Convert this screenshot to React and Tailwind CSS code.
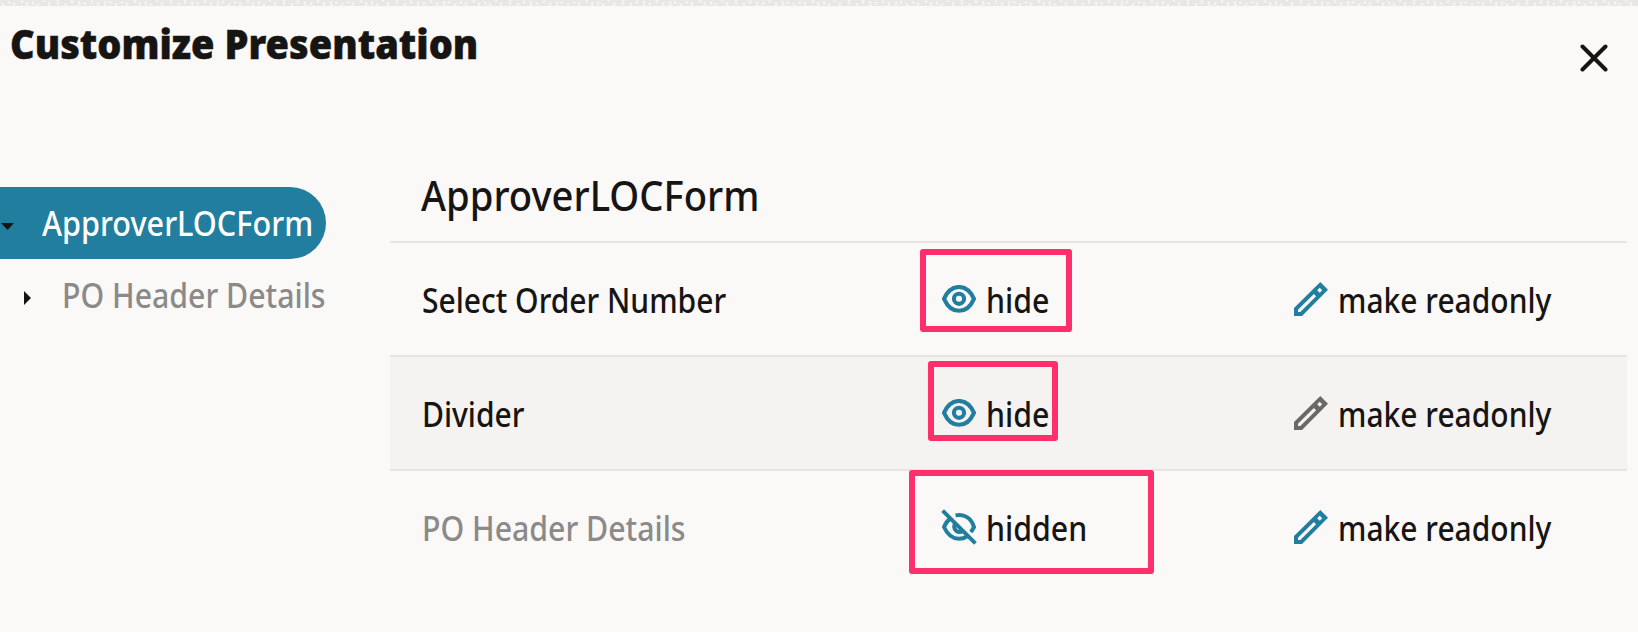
const text = "inline-block origin-left whitespace-nowrap font-medium";

function Eye() {
  return (
    <svg className="block h-[28px] w-[34px]" viewBox="0 0 34 28" fill="none" stroke="#227e9e" strokeWidth="4.1">
      <path d="M2 13.800C5.500 6 10.500 2 17 2s11.500 4 15 11.800C28.500 21.600 23.500 25.800 17 25.800S5.500 21.600 2 13.800Z" strokeLinejoin="round" />
      <circle cx="17" cy="13.800" r="5.100" />
    </svg>
  );
}

function EyeOff() {
  return (
    <svg className="block h-[36px] w-[36px]" viewBox="0 0 36 36" fill="none" stroke="#227e9e" strokeWidth="4">
      <path d="M14.500 6.400C24 4.500 30.500 9.500 33 18c-1 2-2 3.600-3.200 5" />
      <path d="M9.500 9.500C6.500 11.500 4.500 14.500 3 18c3.500 7.800 8.500 11.800 15 11.800 3 0 5.600-.800 7.900-2.300" />
      <path d="M13.800 14.500c-1.700 4.500.5 8 4.200 8.600 1.500.1 2.700-.3 3.700-1.100" />
      <path d="M1.600 1.600 34.400 34.400" />
    </svg>
  );
}

function Pencil({ className }) {
  return (
    <svg className={"block h-[34px] w-[34px] " + className} viewBox="0 0 34 34" fill="currentColor" fillRule="evenodd">
      <path d="M26.300 0 34 7.700 8 34H0V26ZM4 27.800V30H6.300L22.100 14.200 19.900 12ZM25.700 5.700 23.200 8.200 25.700 10.700 28.200 8.200Z" />
    </svg>
  );
}

function TextureBand() {
  return (
    <svg className="block h-[6px] w-full bg-[#e8e7e5]" aria-hidden="true">
      <defs>
        <pattern id="band" width="113" height="6" patternUnits="userSpaceOnUse">
          <path
            d="M3 6V3M9 4V1M14 6V2M22 3V0M27 6V2M33 5V1M38 6V3M44 2V0M49 6V2M58 5V0M66 6V3M72 4V0M79 6V1M85 5V2M92 3V0M98 6V2M105 6V1M110 4V1"
            stroke="#f3f2f0"
            strokeWidth="2.500"
          />
        </pattern>
      </defs>
      <rect width="100%" height="6" fill="url(#band)" />
    </svg>
  );
}

function Row({ label, muted, shaded, state, off, pencil, box }) {
  return (
    <div className={"flex h-[114px] border-t-2 border-[#e6e5e3] pl-8 " + (shaded ? "bg-[#f4f3f1]" : "")}>
      <div className={"flex w-[520px] items-center " + (muted ? "text-[#8b8a89]" : "text-[#161513]")}>
        <span className={(muted ? "scale-x-[0.903] " : "scale-x-[0.896] ") + "pt-[2px] " + text}>{label}</span>
      </div>
      <div className="relative flex w-[352px] items-center">
        <div className={off ? "-ml-px mr-[9px]" : "mr-[10px]"}>{off ? <EyeOff /> : <Eye />}</div>
        <span className={"scale-x-[0.905] pt-[2px] " + text}>{state}</span>
        <div className={"absolute rounded-[3px] border-[6px] border-[#ff2f6c] " + box} />
      </div>
      <div className="flex items-center gap-[10px]">
        <Pencil className={pencil} />
        <span className={"scale-x-[0.895] pt-[2px] " + text}>make readonly</span>
      </div>
    </div>
  );
}

export default function App() {
  return (
    <div className="flex h-[632px] w-[1638px] flex-col overflow-hidden bg-[#fbf9f8] font-['Noto_Sans',sans-serif] text-[33.5px] leading-[48px] text-[#161513]">
      <TextureBand />
      <header className="flex h-[155px] items-start justify-between pl-[10px] pr-[30px]">
        <h1 className="origin-left scale-x-[0.927] whitespace-nowrap pt-[13px] text-[41px] font-black [-webkit-text-stroke:0.5px_#161513]">Customize Presentation</h1>
        <svg className="mt-[38px] block h-7 w-7" viewBox="0 0 28 28" stroke="#161513" strokeWidth="4" strokeLinecap="round">
          <path d="M2.500 2.500 25.500 25.500M25.500 2.500 2.500 25.500" />
        </svg>
      </header>
      <div className="flex">
        <nav className="w-[390px] pt-[26px]">
          <div className="flex h-[72px] w-[326px] items-center rounded-r-full bg-[#227e9e] pl-px text-white">
            <svg className="mr-[28px] mt-[6px] block h-[7px] w-[13px] shrink-0" viewBox="0 0 13 7" fill="#161513"><path d="M0 0H13L6.500 7Z" /></svg>
            <span className={"scale-x-[0.914] " + text}>ApproverLOCForm</span>
          </div>
          <div className="flex h-[72px] items-center pl-[24px] text-[#8b8a89]">
            <svg className="mr-[31px] mt-[6px] block h-[14px] w-[7px] shrink-0" viewBox="0 0 7 14" fill="#161513"><path d="M0 0V14L7 7Z" /></svg>
            <span className={"scale-x-[0.903] " + text}>PO Header Details</span>
          </div>
        </nav>
        <main className="w-[1237px]">
          <h2 className="h-[80px] pl-[31px] pt-[10px] text-[42px]">
            <span className={"scale-x-[0.91] " + text}>ApproverLOCForm</span>
          </h2>
          <Row label="Select Order Number" state="hide" pencil="text-[#227e9e]" box="left-[-22px] top-[6px] h-[83px] w-[152px]" />
          <Row label="Divider" shaded state="hide" pencil="text-[#6b6967]" box="left-[-14px] top-[4px] h-[80px] w-[130px]" />
          <Row label="PO Header Details" muted state="hidden" off pencil="text-[#227e9e]" box="left-[-33px] top-[-1px] h-[104px] w-[245px]" />
        </main>
      </div>
    </div>
  );
}
